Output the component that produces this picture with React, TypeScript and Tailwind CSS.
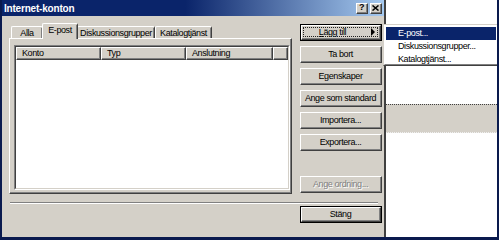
import React from 'react'

const raised =
  'border border-t-white border-l-white border-r-[#404040] border-b-[#404040] bg-[#d4d0c8]'

const Btn = ({
  children,
  disabled,
  dflt,
  focus,
  arrow,
  className = '',
}: {
  children: React.ReactNode
  disabled?: boolean
  dflt?: boolean
  focus?: boolean
  arrow?: boolean
  className?: string
}) => {
  const inner = (
    <div className={`h-full ${raised}`}>
      <div className="h-full border-r border-b border-[#808080] relative flex items-center">
        <div
          className={`flex-1 h-full flex items-center justify-center whitespace-nowrap ${
            arrow ? 'pr-[16px]' : ''
          } ${
            disabled
              ? 'text-[#808080] [text-shadow:1px_1px_0_#ffffff]'
              : 'text-black'
          }`}
        >
          {children}
        </div>
        {arrow && (
          <span className="absolute right-[4px] top-[2px] w-0 h-0 border-y-[4px] border-y-transparent border-l-[4px] border-l-black" />
        )}
        {focus && (
          <span className="absolute inset-[1px] border border-dotted border-[#202020]" />
        )}
      </div>
    </div>
  )
  return (
    <div
      className={`h-[17px] w-[82px] ${
        dflt || focus ? 'border border-black' : ''
      } ${className}`}
    >
      {inner}
    </div>
  )
}

const Tab = ({ label, w, selected }: { label: string; w: string; selected?: boolean }) => (
  <div
    className={`${w} ${
      selected ? 'h-[16px] -mb-[1px] z-10 -mx-[1px]' : 'h-[12px]'
    } relative bg-[#d4d0c8] border-t border-l border-white border-r border-r-[#404040] rounded-t-[2px] flex items-center justify-center whitespace-nowrap`}
  >
    <div className="absolute right-0 top-[1px] bottom-0 border-r border-[#808080]" />
    <span className={selected ? 'pb-[2px]' : 'pt-[1px]'}>{label}</span>
  </div>
)

const HeaderCol = ({ label, w }: { label: string; w: string }) => (
  <div className={`${w} h-full ${raised}`}>
    <div className="h-full border-r border-b border-[#808080] flex items-center pl-[5px]">
      {label}
    </div>
  </div>
)

const MenuItem = ({ label, active }: { label: string; active?: boolean }) => (
  <div
    className={`h-[13px] flex items-center pl-[12px] ${
      active ? 'bg-[#0a246a] text-white' : 'text-black'
    }`}
  >
    {label}
  </div>
)

export default function App() {
  return (
    <div className="w-[499px] h-[240px] flex bg-white border-l-2 border-r-2 border-b-[3px] border-[#0a1a4e] font-['Liberation_Sans',Arial,sans-serif] text-[9px] leading-[11px] tracking-[-0.4px] relative overflow-hidden select-none">
      {/* dialog */}
      <div className="w-[384px] h-full flex flex-col bg-[#d4d0c8] border-r-2 border-r-[#404040]">
        {/* title bar */}
        <div className="h-[16px] flex items-center bg-[linear-gradient(to_right,#0a246a_48%,#a6caf0)] pl-[2px] pr-[2px]">
          <span className="text-white font-bold text-[10px] tracking-[-0.2px]">
            Internet-konton
          </span>
          <div className="ml-auto flex gap-[2px]">
            <div className={`w-[12px] h-[11px] ${raised}`}>
              <div className="h-full border-r border-b border-[#808080] flex items-center justify-center font-bold text-[9px] leading-none">
                ?
              </div>
            </div>
            <div className={`w-[12px] h-[11px] ${raised}`}>
              <div className="h-full border-r border-b border-[#808080] flex items-center justify-center">
                <svg width="7" height="6" viewBox="0 0 7 6">
                  <path d="M0.5 0.5 L6.5 5.5 M6.5 0.5 L0.5 5.5" stroke="#000" strokeWidth="1.5" />
                </svg>
              </div>
            </div>
          </div>
        </div>

        {/* body */}
        <div className="flex-1 flex flex-col pl-[7px] pr-[1px] pt-[7px]">
          <div className="flex gap-[8px]">
            {/* tabs + panel */}
            <div className="w-[283px] flex flex-col">
              <div className="h-[15px] flex items-end pl-[2px]">
                <Tab label="Alla" w="w-[32px]" />
                <Tab label="E-post" w="w-[36px]" selected />
                <Tab label="Diskussionsgrupper" w="w-[78px]" />
                <Tab label="Katalogtjänst" w="w-[57px]" />
              </div>
              <div className="h-[156px] border-t border-l border-white border-r border-b border-r-[#404040] border-b-[#404040]">
                <div className="h-full border-r border-b border-[#808080] pl-[4px] pt-[6px] pb-[2px]">
                  <div className="h-full border border-t-[#808080] border-l-[#808080] border-r-white border-b-white">
                    <div className="h-full border border-t-[#404040] border-l-[#404040] border-r-[#d4d0c8] border-b-[#d4d0c8] bg-white flex flex-col">
                      <div className="h-[13px] flex">
                        <HeaderCol label="Konto" w="w-[85px]" />
                        <HeaderCol label="Typ" w="w-[85px]" />
                        <HeaderCol label="Anslutning" w="w-[87px]" />
                        <HeaderCol label="" w="flex-1" />
                      </div>
                    </div>
                  </div>
                </div>
              </div>
            </div>

            {/* buttons */}
            <div className="flex flex-col gap-[5px] pt-[1px] pb-[1px]">
              <Btn arrow focus>
                <span>
                  <span className="underline">L</span>ägg till
                </span>
              </Btn>
              <Btn>Ta bort</Btn>
              <Btn>Egenskaper</Btn>
              <Btn>Ange som standard</Btn>
              <Btn>Importera...</Btn>
              <Btn>Exportera...</Btn>
              <Btn disabled className="mt-auto">
                Ange ordning...
              </Btn>
            </div>
          </div>

          {/* separator */}
          <div className="mt-[8px] ml-[1px] w-[368px] border-t border-t-[#808080] border-b border-b-white" />

          <div className="flex justify-end pt-[2px] pr-[1px]">
            <Btn dflt>Stäng</Btn>
          </div>
        </div>
      </div>

      {/* area behind */}
      <div className="flex-1 flex flex-col">
        <div className="h-[104px]" />
        <div className="h-[29px] bg-[#d4d0c8] border-t border-dotted border-t-[#404040] border-b border-b-[#f0f0f0]" />
        <div className="flex-1 bg-white" />
      </div>

      {/* popup menu */}
      <div className="absolute left-[381px] top-[24px] w-[116px] h-[42px] bg-white border border-t-[#d4d0c8] border-l-[#d4d0c8] border-r-[#404040] border-b-[#404040]">
        <div className="h-full border border-t-white border-l-white border-r-[#808080] border-b-[#808080] pt-[1px] px-[1px]">
          <MenuItem label="E-post..." active />
          <MenuItem label="Diskussionsgrupper..." />
          <MenuItem label="Katalogtjänst..." />
        </div>
      </div>
    </div>
  )
}
